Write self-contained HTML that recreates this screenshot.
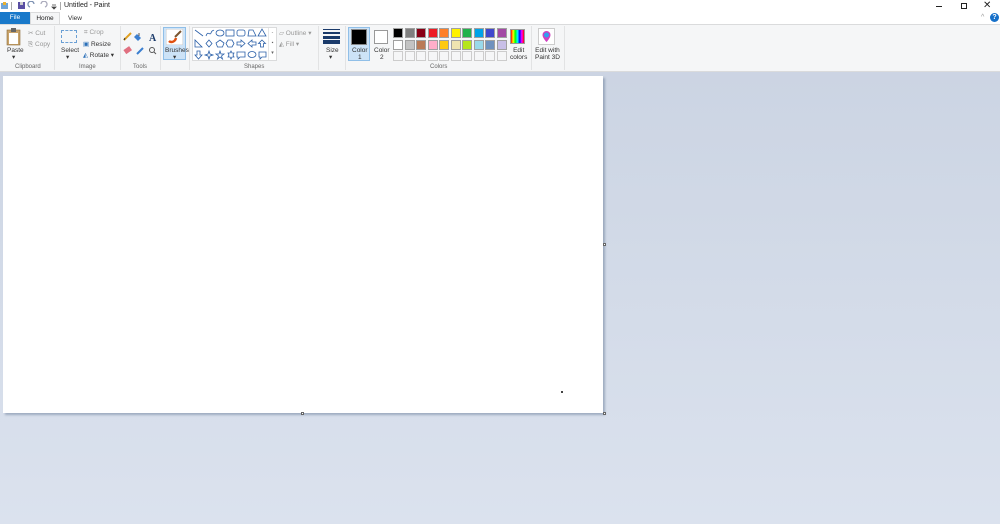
<!DOCTYPE html>
<html><head><meta charset="utf-8"><style>
*{margin:0;padding:0;box-sizing:border-box}
body{width:1000px;height:524px;overflow:hidden;font-family:"Liberation Sans",sans-serif;position:relative;background:linear-gradient(#c9d2e1,#dbe2ee)}
.a{position:absolute}
.t{position:absolute;font-size:6.5px;color:#333;white-space:nowrap}
.g{color:#999}
.lbl{position:absolute;font-size:6px;color:#666;top:64px}
.sep{position:absolute;top:26px;width:1px;height:44px;background:#e2e3e4}
.sw{position:absolute;width:10px;height:10px;border:1px solid #a0a0a0}
</style></head><body>
<div class="a" style="left:0;top:0;width:1000px;height:24px;background:#fff"></div>
<!-- title bar -->
<svg class="a" style="left:0;top:1px" width="60" height="10">
<rect x="1" y="2" width="7" height="6" fill="#6fa5d8"/><rect x="3" y="1" width="3" height="3" fill="#e8b030"/>
<rect x="11" y="1" width="1" height="8" fill="#aaa"/>
<rect x="18" y="1" width="7" height="7" fill="#5a4fa3"/><rect x="20" y="1" width="3" height="3" fill="#ccc"/>
<path d="M30 6a3 3 0 1 1 4 -3" stroke="#7a8fb0" fill="none" stroke-width="1.3"/>
<path d="M45 6a3 3 0 1 0 -4 -3" stroke="#aab" fill="none" stroke-width="1.3"/>
<path d="M52 4h4M52 6l2 2 2-2z" stroke="#444" fill="#444" stroke-width=".8"/>
</svg>
<div class="a" style="left:60px;top:2px;width:1px;height:8px;background:#aaa"></div>
<div class="t" style="left:64px;top:2px;font-size:7px;color:#222">Untitled - Paint</div>
<div class="a" style="left:936px;top:6px;width:6px;height:1px;background:#222"></div>
<div class="a" style="left:961px;top:3px;width:6px;height:6px;border:1px solid #222"></div>
<div class="t" style="left:983px;top:0px;font-size:10px;color:#222">✕</div>
<div class="t" style="left:981px;top:14px;font-size:7px;color:#999">^</div>
<div class="a" style="left:990px;top:13px;width:9px;height:9px;border-radius:50%;background:#1670c9;color:#fff;font-size:7px;font-weight:bold;text-align:center;line-height:9px">?</div>
<!-- tabs -->
<div class="a" style="left:0;top:12px;width:30px;height:12px;background:#1979ca;color:#fff;font-size:6.5px;text-align:center;line-height:12px">File</div>
<div class="a" style="left:30px;top:12px;width:30px;height:13px;background:#f5f6f7;border:1px solid #dadbdc;border-bottom:none;font-size:6.5px;text-align:center;line-height:11px;color:#222">Home</div>
<div class="t" style="left:68px;top:15px;color:#333">View</div>
<!-- ribbon -->
<div class="a" style="left:0;top:24px;width:1000px;height:48px;background:#f5f6f7;border-top:1px solid #dadbdc;border-bottom:1px solid #dadbdc"></div>
<!-- clipboard -->
<svg class="a" style="left:6px;top:28px" width="16" height="18"><rect x="1" y="2" width="13" height="15" fill="#c8a36a" stroke="#8a6a3a" stroke-width=".6"/><rect x="3" y="5" width="9" height="11" fill="#fff"/><rect x="5" y="0" width="5" height="4" fill="#666"/></svg>
<div class="t" style="left:7px;top:47px">Paste</div><div class="t" style="left:12px;top:53px">▾</div>
<div class="t g" style="left:28px;top:29px">✂ Cut</div>
<div class="t g" style="left:28px;top:41px">⎘ Copy</div>
<div class="lbl" style="left:15px">Clipboard</div>
<div class="sep" style="left:54px"></div>
<!-- image -->
<div class="a" style="left:61px;top:30px;width:16px;height:13px;border:1px dashed #6a9fd4"></div>
<div class="t" style="left:61px;top:47px">Select</div><div class="t" style="left:66px;top:53px">▾</div>
<div class="t g" style="left:84px;top:29px">⌗ Crop</div>
<div class="t" style="left:83px;top:40px"><span style="color:#2a6fb8">▣</span> Resize</div>
<div class="t" style="left:83px;top:51px"><span style="color:#2a6fb8">◭</span> Rotate ▾</div>
<div class="lbl" style="left:79px">Image</div>
<div class="sep" style="left:120px"></div>
<!-- tools -->
<svg class="a" style="left:122px;top:30px" width="40" height="28">
<path d="M2 10l7-7" stroke="#e0a020" stroke-width="2"/><path d="M2 10l1-2" stroke="#333"/>
<path d="M15 4l4 4-3 3-4-4z" fill="#3b7fd0"/><path d="M17 3v3" stroke="#555"/>
<text x="27" y="11" font-family="Liberation Serif" font-weight="bold" font-size="10" fill="#1a3a6a">A</text>
<rect x="2" y="18" width="7" height="5" fill="#e07080" transform="rotate(-35 5 20)"/>
<path d="M15 24l6-6" stroke="#3b7fd0" stroke-width="2"/>
<circle cx="30" cy="20" r="2.5" stroke="#555" fill="none"/><path d="M32 22l2 2" stroke="#555"/>
</svg>
<div class="lbl" style="left:133px">Tools</div>
<div class="sep" style="left:160px"></div>
<!-- brushes -->
<div class="a" style="left:163px;top:27px;width:23px;height:33px;background:#cde3f7;border:1px solid #90bfe8"></div>
<svg class="a" style="left:166px;top:29px" width="17" height="16"><rect x="0" y="0" width="17" height="16" fill="#fff" stroke="#ccc"/><path d="M3 12c2 2 6 1 7-3" stroke="#e05010" stroke-width="2.5" fill="none"/><path d="M9 8l6-6" stroke="#7a5530" stroke-width="2"/></svg>
<div class="t" style="left:165px;top:47px">Brushes</div><div class="t" style="left:173px;top:53px">▾</div>
<div class="sep" style="left:189px"></div>
<!-- shapes -->
<div class="a" style="left:192px;top:27px;width:85px;height:34px;background:#fff;border:1px solid #dadbdc"></div>
<svg class="a" style="left:193px;top:28px" width="84" height="32" fill="none" stroke="#2a5fa8" stroke-width=".8">
<path d="M2 2l8 6"/><path d="M13 8c2-6 4 0 5-3s2-2 3-3"/><ellipse cx="27" cy="5" rx="4" ry="3"/><rect x="33" y="2" width="8" height="6"/><rect x="44" y="2" width="8" height="6" rx="2"/><path d="M55 8l1-6h4l3 6z"/><path d="M65 8l4-7 4 7z"/>
<path d="M2 12v7h7z"/><path d="M16 12l3 3.5-3 3.5-3-3.5z"/><path d="M27 12l4 3-1.5 4h-5L23 15z"/><path d="M35 12h4l2 3.5-2 3.5h-4l-2-3.5z"/><path d="M44 14h4v-2l4 3.5-4 3.5v-2h-4z"/><path d="M63 14h-4v-2l-4 3.5 4 3.5v-2h4z"/><path d="M69 12l3.5 3.5h-2V19h-3v-3.5h-2z"/>
<path d="M4 23h3v4h2l-3.5 4L2 27h2z"/><path d="M16 23l1 3 3 1-3 1-1 3-1-3-3-1 3-1z"/><path d="M27 23l1 3h3l-2.5 2 1 3-2.5-2-2.5 2 1-3-2.5-2h3z"/><path d="M38 23l1 2 2 0-1 2 1 2-2 0-1 2-1-2-2 0 1-2-1-2 2 0z"/><path d="M44 24h8v5h-5l-2 2v-2h-1z"/><ellipse cx="59" cy="26.5" rx="4" ry="3"/><path d="M66 24h7v5h-4l-2 2v-2h-1z"/>
</svg>
<div class="a" style="left:268px;top:28px;width:8px;height:32px;border-left:1px solid #e5e5e5;font-size:5px;color:#666;line-height:10px;text-align:center">-<br>▪<br>▾</div>
<div class="t g" style="left:279px;top:29px">▱ Outline ▾</div>
<div class="t g" style="left:279px;top:40px">◭ Fill ▾</div>
<div class="lbl" style="left:244px">Shapes</div>
<div class="sep" style="left:318px"></div>
<!-- size -->
<div class="a" style="left:323px;top:29px;width:17px;height:1px;background:#1a3a6a"></div>
<div class="a" style="left:323px;top:32px;width:17px;height:2px;background:#1a3a6a"></div>
<div class="a" style="left:323px;top:36px;width:17px;height:3px;background:#1a3a6a"></div>
<div class="a" style="left:323px;top:40px;width:17px;height:4px;background:#1a3a6a"></div>
<div class="t" style="left:326px;top:47px">Size</div><div class="t" style="left:329px;top:53px">▾</div>
<div class="sep" style="left:345px"></div>
<!-- colors -->
<div class="a" style="left:348px;top:27px;width:22px;height:34px;background:#cde3f7;border:1px solid #90bfe8"></div>
<div class="a" style="left:351px;top:29px;width:16px;height:16px;background:#000;border:1px solid #888"></div>
<div class="t" style="left:352px;top:47px;line-height:7px;text-align:center">Color<br>1</div>
<div class="a" style="left:374px;top:30px;width:14px;height:14px;background:#fff;border:1px solid #999"></div>
<div class="t" style="left:374px;top:47px;line-height:7px;text-align:center">Color<br>2</div>
<div id="pal"></div>
<div class="sw" style="left:393px;top:28px;background:#000"></div>
<div class="sw" style="left:404.5px;top:28px;background:#7f7f7f"></div>
<div class="sw" style="left:416px;top:28px;background:#880015"></div>
<div class="sw" style="left:427.5px;top:28px;background:#ed1c24"></div>
<div class="sw" style="left:439px;top:28px;background:#ff7f27"></div>
<div class="sw" style="left:450.5px;top:28px;background:#fff200"></div>
<div class="sw" style="left:462px;top:28px;background:#22b14c"></div>
<div class="sw" style="left:473.5px;top:28px;background:#00a2e8"></div>
<div class="sw" style="left:485px;top:28px;background:#3f48cc"></div>
<div class="sw" style="left:496.5px;top:28px;background:#a349a4"></div>
<div class="sw" style="left:393px;top:39.5px;background:#fff"></div>
<div class="sw" style="left:404.5px;top:39.5px;background:#c3c3c3"></div>
<div class="sw" style="left:416px;top:39.5px;background:#b97a57"></div>
<div class="sw" style="left:427.5px;top:39.5px;background:#ffaec9"></div>
<div class="sw" style="left:439px;top:39.5px;background:#ffc90e"></div>
<div class="sw" style="left:450.5px;top:39.5px;background:#efe4b0"></div>
<div class="sw" style="left:462px;top:39.5px;background:#b5e61d"></div>
<div class="sw" style="left:473.5px;top:39.5px;background:#99d9ea"></div>
<div class="sw" style="left:485px;top:39.5px;background:#7092be"></div>
<div class="sw" style="left:496.5px;top:39.5px;background:#c8bfe7"></div>
<div class="sw" style="left:393px;top:51px;background:#f5f6f7;border-color:#ccc"></div>
<div class="sw" style="left:404.5px;top:51px;background:#f5f6f7;border-color:#ccc"></div>
<div class="sw" style="left:416px;top:51px;background:#f5f6f7;border-color:#ccc"></div>
<div class="sw" style="left:427.5px;top:51px;background:#f5f6f7;border-color:#ccc"></div>
<div class="sw" style="left:439px;top:51px;background:#f5f6f7;border-color:#ccc"></div>
<div class="sw" style="left:450.5px;top:51px;background:#f5f6f7;border-color:#ccc"></div>
<div class="sw" style="left:462px;top:51px;background:#f5f6f7;border-color:#ccc"></div>
<div class="sw" style="left:473.5px;top:51px;background:#f5f6f7;border-color:#ccc"></div>
<div class="sw" style="left:485px;top:51px;background:#f5f6f7;border-color:#ccc"></div>
<div class="sw" style="left:496.5px;top:51px;background:#f5f6f7;border-color:#ccc"></div>
<div class="a" style="left:510px;top:29px;width:15px;height:15px;border:1px solid #999;background:linear-gradient(90deg,#f00,#ff0,#0f0,#0ff,#00f,#f0f,#f00)"></div>
<div class="t" style="left:510px;top:47px;line-height:7px;text-align:center">Edit<br>colors</div>
<div class="lbl" style="left:430px">Colors</div>
<div class="sep" style="left:531px"></div>
<div class="a" style="left:538px;top:28px;width:17px;height:17px;background:#fff;border:1px solid #ccc"></div>
<svg class="a" style="left:541px;top:30px" width="11" height="13"><path d="M5.5 1a4 4 0 0 1 4 4c0 3-4 7-4 7s-4-4-4-7a4 4 0 0 1 4-4z" fill="#d040c0"/><circle cx="5.5" cy="5" r="2.5" fill="#30a0f0"/></svg>
<div class="t" style="left:535px;top:47px;line-height:7px;text-align:center">Edit with<br>Paint 3D</div>
<div class="sep" style="left:564px"></div>
<!-- canvas -->
<div class="a" style="left:3px;top:76px;width:600px;height:337px;background:#fff;box-shadow:2px 2px 2px rgba(90,110,140,.45)"></div>
<div class="a" style="left:561px;top:391px;width:2px;height:2px;background:#444"></div>
<div class="a" style="left:603px;top:243px;width:3px;height:3px;border:1px solid #666;background:#fff"></div>
<div class="a" style="left:301px;top:412px;width:3px;height:3px;border:1px solid #666;background:#fff"></div>
<div class="a" style="left:603px;top:412px;width:3px;height:3px;border:1px solid #666;background:#fff"></div>
</body></html>
